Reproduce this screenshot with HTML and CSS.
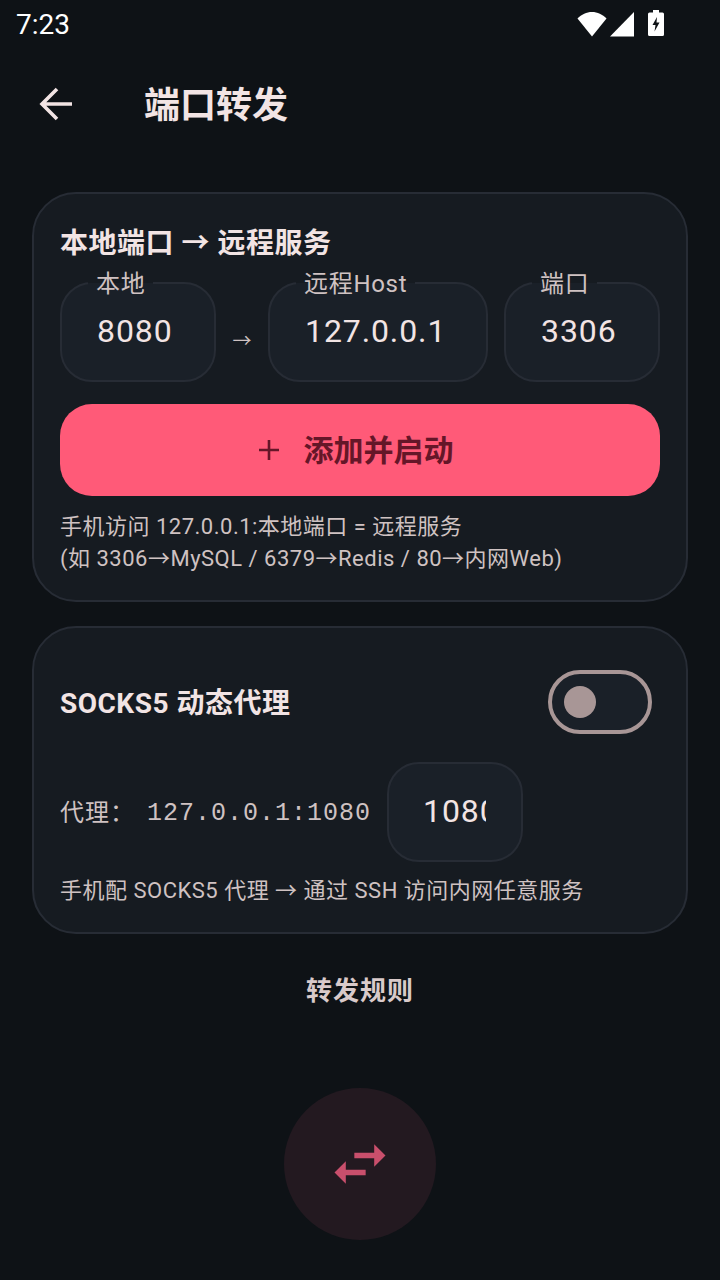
FILE: index.html
```html
<!DOCTYPE html>
<html lang="zh-CN">
<head>
<meta charset="utf-8">
<title>端口转发</title>
<link rel="stylesheet" href="styles.css">
</head>
<body>
<div class="screen">
  <div class="status-bar">
    <span class="time">7:23</span>
    <div class="status-icons">
      <svg class="ic-wifi" width="30" height="26" viewBox="0 0 30 26"><path d="M15 25.500 0.500 7.500C4.500 3.500 9.500 1 15 1s10.500 2.500 14.500 6.500z" fill="#fff"/></svg>
      <svg class="ic-signal" width="24" height="26" viewBox="0 0 24 26"><path d="M0 25.500 24 1v24.500z" fill="#fff"/></svg>
      <svg class="ic-battery" width="16" height="26" viewBox="0 0 16 26"><path fill-rule="evenodd" d="M5 0h6v2.500h3.500a1.500 1.500 0 0 1 1.500 1.500v20.500a1.500 1.500 0 0 1-1.500 1.500h-13A1.500 1.500 0 0 1 0 24.500V4a1.500 1.500 0 0 1 1.500-1.500H5zM9 7 4.500 15H7.500l-1 6.500L11.500 12.500H8.500z" fill="#fff"/></svg>
    </div>
  </div>

  <header class="topbar">
    <svg class="back" width="48" height="48" viewBox="0 0 48 48"><path d="M40 24H10M25 9 10 24l15 15" fill="none" stroke="#f2e4e4" stroke-width="3.600"/></svg>
    <h1 class="title">端口转发</h1>
  </header>

  <main class="content">
    <section class="card card-forward">
      <h2 class="card-title">本地端口 → 远程服务</h2>
      <div class="field-row">
        <div class="field field-port"><span class="field-label">本地</span><div class="field-value">8080</div></div>
        <span class="row-arrow">→</span>
        <div class="field field-host"><span class="field-label">远程Host</span><div class="field-value">127.0.0.1</div></div>
        <div class="field field-port"><span class="field-label">端口</span><div class="field-value">3306</div></div>
      </div>
      <button class="primary-btn">
        <svg width="24" height="24" viewBox="0 0 24 24"><path d="M12 2v20M2 12h20" stroke="#651628" stroke-width="2.600" fill="none"/></svg>
        <span class="btn-label">添加并启动</span>
      </button>
      <p class="help">手机访问 127.0.0.1:本地端口 = 远程服务<br>(如 3306→MySQL / 6379→Redis / 80→内网Web)</p>
    </section>

    <section class="card card-socks">
      <div class="socks-head">
        <h2 class="card-title">SOCKS5 动态代理</h2>
        <div class="switch"><span class="thumb"></span></div>
      </div>
      <div class="proxy-row">
        <span class="proxy-label">代理：</span>
        <span class="proxy-addr">127.0.0.1:1080</span>
        <div class="field field-proxy"><div class="field-value clip">1080</div></div>
      </div>
      <p class="help help-socks">手机配 SOCKS5 代理 → 通过 SSH 访问内网任意服务</p>
    </section>

    <h3 class="rules-title">转发规则</h3>
    <div class="empty-circle">
      <svg width="68" height="68" viewBox="0 0 24 24"><path d="M6.990 11 3 15l3.990 4v-3H14v-2H6.990zM21 9l-3.990-4v3H10v2h7.010v3z" fill="#c94f6c"/></svg>
    </div>
  </main>
</div>
</body>
</html>
```

FILE: styles.css
```css
* { box-sizing: border-box; }
html, body { margin: 0; padding: 0; }
body {
  background: #0e1216;
  font-family: Roboto, "Noto Sans CJK SC", sans-serif;
  color: #f2e4e4;
}
.screen { width: 720px; height: 1280px; overflow: hidden; }

.status-bar {
  height: 48px;
  display: flex;
  align-items: center;
  justify-content: space-between;
  padding: 0 56px 0 16px;
}
.time { font-size: 28px; color: #fff; line-height: 48px; padding-top: 2px; }
.status-icons { display: flex; align-items: flex-start; height: 48px; padding-top: 10px; }
.ic-wifi { margin-top: 1px; }
.ic-signal { margin: 1px 0 0 3px; }
.ic-battery { margin-left: 14px; }

.topbar { height: 112px; display: flex; align-items: center; padding-left: 32px; }
.back { flex: none; }
.title { margin: 0 0 0 64px; padding-top: 4px; font-size: 36px; font-weight: 700; line-height: 48px; }

.content { padding: 32px 32px 0; display: flex; flex-direction: column; }
.card {
  background: #161b21;
  border: 2px solid #272c35;
  border-radius: 44px;
  padding: 26px 26px 0;
}
.card-forward { height: 410px; }
.card-socks { height: 308px; margin-top: 24px; }
.card-title { margin: 0; padding-top: 4px; font-size: 28px; font-weight: 700; line-height: 44px; letter-spacing: .5px; }
.card-forward .card-title { padding-top: 2px; }

.field-row { display: flex; margin-top: 16px; }
.field {
  position: relative;
  height: 100px;
  background: #1a2028;
  border: 2px solid #272c35;
  border-radius: 32px;
  padding: 0 35px;
  display: flex;
  align-items: center;
}
.field-port { width: 156px; }
.field-host { width: 220px; margin-right: 16px; }
.field-label {
  position: absolute;
  left: 26px;
  top: -14px;
  padding: 0 8px;
  font-size: 24px;
  line-height: 28px;
  letter-spacing: .7px;
  color: #cfc2c2;
  background: linear-gradient(#161b21 45%, #1a2028 45%);
}
.field-value { font-size: 32px; line-height: 40px; letter-spacing: .9px; margin-top: -2px; white-space: nowrap; }
.row-arrow { width: 52px; text-align: center; font-size: 19px; line-height: 28px; padding-top: 46px; color: #cfc2c2; }

.primary-btn {
  width: 600px;
  height: 92px;
  margin-top: 22px;
  padding: 0 10px 0 0;
  border: 0;
  border-radius: 32px;
  background: #ff5a78;
  color: #651628;
  font: 700 30px Roboto, "Noto Sans CJK SC", sans-serif;
  display: flex;
  align-items: center;
  justify-content: center;
  gap: 23px;
}
.btn-label { margin-top: -4px; }
.help { margin: 15px 0 0; font-size: 22px; line-height: 32px; letter-spacing: .5px; color: #cfc2c2; }

.socks-head { display: flex; align-items: center; justify-content: space-between; height: 64px; margin-top: 16px; padding-right: 8px; }
.switch {
  width: 104px;
  height: 64px;
  border: 4px solid #a89696;
  border-radius: 32px;
  background: #1a2028;
  display: flex;
  align-items: center;
  padding-left: 12px;
}
.thumb { width: 32px; height: 32px; border-radius: 50%; background: #a89696; }

.proxy-row { display: flex; align-items: center; margin-top: 28px; color: #cfc2c2; }
.proxy-label { font-family: Roboto, "Noto Sans CJK TC", sans-serif; font-size: 24px; letter-spacing: 1px; width: 87px; margin-top: -4px; }
.proxy-addr { font-family: "Liberation Mono", monospace; font-size: 25px; letter-spacing: 1px; width: 240px; margin-top: 2px; }
.field-proxy { width: 136px; padding: 0 34px; }
.field-proxy .field-value { color: #f2e4e4; }
.clip { width: 63px; overflow: hidden; }
.help-socks { margin-top: 13px; }

.rules-title { margin: 36px 0 0; padding-top: 1px; text-align: center; font-size: 26px; font-weight: 700; line-height: 40px; letter-spacing: 1px; color: #d9caca; }
.empty-circle {
  width: 152px;
  height: 152px;
  margin: 77px auto 0;
  border-radius: 50%;
  background: #231920;
  display: flex;
  align-items: center;
  justify-content: center;
}
```
